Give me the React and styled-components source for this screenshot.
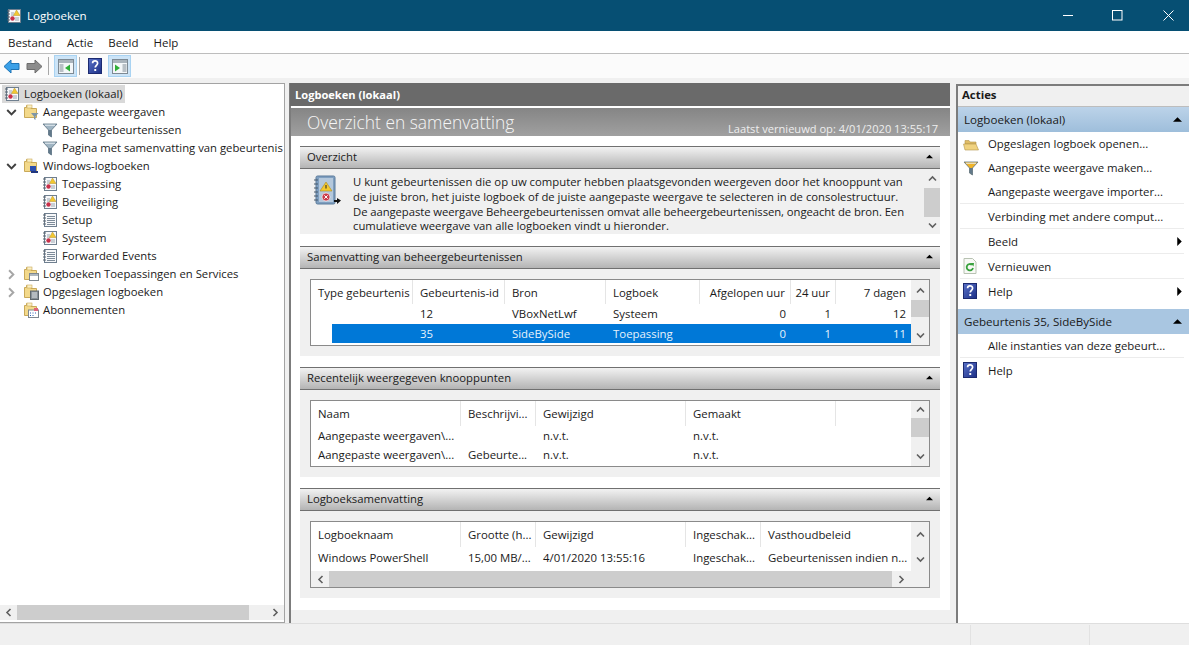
import React from "react"
import styled, { createGlobalStyle } from "styled-components"

const GlobalStyle = createGlobalStyle`
  html, body {
    margin: 0;
    padding: 0;
    background: #f0f0f0;
  }
  * {
    box-sizing: border-box;
  }
`

const Window = styled.div`
  width: 1189px;
  height: 645px;
  display: flex;
  flex-direction: column;
  overflow: hidden;
  font-family: "Open Sans", "Noto Sans", sans-serif;
  font-size: 11.4px;
  color: #1a1a1a;
`

const TitleBar = styled.div`
  height: 31px;
  flex: none;
  display: flex;
  align-items: center;
  padding-left: 6px;
  background: #064f73;
  color: #fff;
  font-size: 11.6px;
  gap: 5px;
`

const TitleText = styled.div`
  flex: 1;
`

const WinButton = styled.div`
  width: ${p => p.$w}px;
  height: 31px;
  display: flex;
  align-items: center;
  justify-content: center;
`

const MenuBar = styled.div`
  height: 23px;
  flex: none;
  display: flex;
  align-items: center;
  padding-left: 8px;
  gap: 15px;
  background: #fff;
  border-bottom: 1px solid #bdbdbd;
  font-size: 11.5px;
`

const Toolbar = styled.div`
  height: 24px;
  flex: none;
  display: flex;
  align-items: center;
  padding-left: 3px;
  background: #fbfbfb;
`

const ToolIcon = styled.div`
  width: ${p => p.$w || 23}px;
  height: 22px;
  display: flex;
  align-items: center;
  justify-content: center;
  ${p => p.$active && "background: #cce4f7; border: 1px solid #a9d3f2;"}
`

const ToolSep = styled.div`
  width: 1px;
  height: 18px;
  background: #a8a8a8;
  margin: 0 ${p => p.$r || 5}px 0 ${p => p.$l || 2}px;
`

const Panes = styled.div`
  flex: 1;
  min-height: 0;
  margin-top: 5px;
  display: flex;
  background: #f0f0f0;
`

const TreePane = styled.div`
  width: 285px;
  flex: none;
  display: flex;
  flex-direction: column;
  padding-bottom: 2px;
  background: #fff;
  border-top: 1px solid #a3a3a3;
  border-right: 1px solid #a3a3a3;
  border-bottom: 1px solid #a3a3a3;
`

const Tree = styled.div`
  flex: 1;
  min-height: 0;
  padding-top: 1px;
  overflow: hidden;
  font-size: 11.3px;
`

const TreeRow = styled.div`
  height: 18px;
  display: flex;
  align-items: center;
  white-space: nowrap;
  padding-left: ${p => (p.$level === 0 ? 2 : 4 + (p.$level - 1) * 19)}px;
`

const Twist = styled.div`
  width: 19px;
  flex: none;
  display: flex;
  align-items: center;
  padding-left: 2px;
`

const NodeLabel = styled.div`
  display: flex;
  align-items: center;
  gap: 4px;
  height: 18px;
  padding: 0 ${p => (p.$selected ? 2 : 0)}px 2px;
  background: ${p => (p.$selected ? "#d9d9d9" : "transparent")};

  svg {
    margin-top: 2px;
  }
`

const CenterPane = styled.div`
  width: 661px;
  flex: none;
  margin-left: 4px;
  display: flex;
  flex-direction: column;
  border-left: 2px solid #7c7c7c;
  background: #fff;
`

const PaneHeader = styled.div`
  height: 23px;
  flex: none;
  display: flex;
  align-items: center;
  padding-left: 5px;
  background: #6a6a6a;
  color: #fff;
  font-weight: 700;
  font-size: 11.1px;
  margin-left: -1px;
`

const Banner = styled.div`
  height: 28px;
  flex: none;
  margin-top: 2px;
  display: flex;
  align-items: flex-end;
  justify-content: space-between;
  padding: 0 12px 0 16px;
  background: linear-gradient(#858585, #a0a0a0);
  color: #f6f6f6;
`

const BannerTitle = styled.div`
  font-size: 17.4px;
  font-weight: 300;
  line-height: 28px;
`

const BannerMeta = styled.div`
  font-size: 11.1px;
  color: #eeeeee;
  line-height: 14px;
`

const CenterBody = styled.div`
  flex: 1;
  min-height: 0;
  padding: 10px 10px 0 9px;
  display: flex;
  flex-direction: column;
`

const Section = styled.div`
  flex: none;
  margin-bottom: ${p => p.$after ?? 11}px;
`

const SectionHead = styled.div`
  height: 23px;
  display: flex;
  align-items: center;
  justify-content: space-between;
  padding: 0 7px 2px 7px;
  background: linear-gradient(#f2f2f2, #b4b4b4);
  border-top: 1px solid #707070;
  border-bottom: 1px solid #707070;
  font-size: 11.3px;
`

const SectionBody = styled.div`
  background: #f0f0f0;
  padding: 10px;
`

const OverviewBody = styled.div`
  height: 65px;
  display: flex;
  background: #f0f0f0;
  overflow: hidden;
`

const OverviewIcon = styled.div`
  width: 53px;
  flex: none;
  padding: 6px 0 0 13px;
`

const OverviewText = styled.div`
  flex: 1;
  padding-top: 6px;
  line-height: 14.8px;
  font-size: 11.3px;
`

const OverviewLine = styled.div`
  white-space: nowrap;
  letter-spacing: ${p => (p.$tight ? "-0.07px" : "0")};
`

const ListBox = styled.div`
  height: 67px;
  display: flex;
  flex-direction: column;
  background: #fff;
  border: 1px solid #8a8a8a;
`

const ListMain = styled.div`
  flex: 1;
  min-height: 0;
  display: flex;
`

const Columns = styled.div`
  flex: 1;
  min-width: 0;
  display: flex;
  flex-direction: column;
`

const ListRow = styled.div`
  display: grid;
  grid-template-columns: ${p => p.$cols};
  height: ${p => p.$h}px;
  align-items: center;
  white-space: nowrap;
  background: ${p =>
    p.$selected
      ? "linear-gradient(to right, transparent 21px, #0078d7 21px)"
      : "transparent"};
  color: ${p => (p.$selected ? "#e6f2fb" : "#1a1a1a")};
`

const HeadCell = styled.div`
  height: 100%;
  display: flex;
  align-items: center;
  justify-content: ${p => (p.$right ? "flex-end" : "flex-start")};
  padding: 0 5px 0 7px;
  border-right: ${p => (p.$last ? "none" : "1px solid #e5e5e5")};
  overflow: hidden;
`

const Cell = styled.div`
  padding: 0 5px 0 7px;
  text-align: ${p => (p.$right ? "right" : "left")};
  overflow: hidden;
`

const VBar = styled.div`
  width: ${p => p.$w || 18}px;
  flex: none;
  display: flex;
  flex-direction: column;
  background: #f0f0f0;
`

const Arrow = styled.div`
  height: ${p => p.$size || 19}px;
  flex: none;
  display: flex;
  align-items: center;
  justify-content: center;
`

const VTrack = styled.div`
  flex: 1;
  min-height: 0;
`

const VThumb = styled.div`
  height: ${p => p.$h}px;
  background: #cdcdcd;
`

const HBar = styled.div`
  height: ${p => p.$h || 16}px;
  flex: none;
  display: flex;
  background: #f0f0f0;
`

const HArrow = styled.div`
  width: ${p => p.$w || 18}px;
  flex: none;
  display: flex;
  align-items: center;
  justify-content: center;
`

const HThumb = styled.div`
  width: ${p => p.$w}px;
  flex: none;
  background: #cdcdcd;
`

const HRest = styled.div`
  flex: 1;
`

const BottomBand = styled.div`
  margin: auto -10px 0 -9px;
  height: 13px;
  flex: none;
  background: #f0f0f0;
`

const ActionPane = styled.div`
  flex: 1;
  margin: 1px 0 0 6px;
  display: flex;
  flex-direction: column;
  background: #fff;
  border-left: 2px solid #7c7c7c;
  border-top: 2px solid #7c7c7c;
`

const ActionTitle = styled.div`
  height: 21px;
  flex: none;
  display: flex;
  align-items: center;
  padding: 0 0 3px 4px;
  background: #f0f0f0;
  font-weight: 700;
  font-size: 11.4px;
  border-bottom: 1px solid #bdbdbd;
`

const ActionHead = styled.div`
  height: 25px;
  flex: none;
  display: flex;
  align-items: center;
  justify-content: space-between;
  padding: 0 7px 0 6px;
  background: ${p => (p.$flat ? "#a9c6e1" : "linear-gradient(#bcd3e9, #9ebedb)")};
  margin-top: ${p => p.$top || 0}px;
  font-size: 11.6px;
`

const ActionRow = styled.div`
  height: ${p => p.$h || 25}px;
  flex: none;
  display: flex;
  align-items: center;
  margin: 0 5px 0 2px;
  border-bottom: ${p => (p.$line ? "1px solid #ececec" : "1px solid transparent")};
  white-space: nowrap;
`

const ActionIcon = styled.div`
  width: 28px;
  flex: none;
  display: flex;
  align-items: center;
  padding-left: 3px;
`

const ActionLabel = styled.div`
  flex: 1;
`

const StatusBar = styled.div`
  height: 22px;
  flex: none;
  display: flex;
  justify-content: flex-end;
  background: #f0f0f0;
  border-top: 1px solid #dedede;
`

const StatusCell = styled.div`
  width: ${p => p.$w}px;
  border-left: 1px solid #e2e2e2;
  margin-top: 1px;
`

const Chevron = ({ dir, color = "#5f5f5f", size = 9 }) => {
  const pts = {
    up: "1,6.5 4.5,3 8,6.5",
    down: "1,2.5 4.5,6 8,2.5",
    left: "6.5,1 3,4.5 6.5,8",
    right: "2.5,1 6,4.5 2.5,8",
  }
  return (
    <svg width={size} height={size} viewBox="0 0 9 9">
      <polyline points={pts[dir]} fill="none" stroke={color} strokeWidth="1.6" />
    </svg>
  )
}

const Caret = ({ dir = "up", size = 8 }) => (
  <svg width={size} height={size} viewBox="0 0 8 8">
    <polygon points={dir === "up" ? "0,6 4,2 8,6" : "2,0 6,4 2,8"} fill="#000" />
  </svg>
)

const LogIcon = ({ plain }) => (
  <svg width="16" height="16" viewBox="0 0 16 16">
    <rect x="2.5" y="1.5" width="12" height="13" fill="#f7f8fa" stroke="#6f7f8f" />
    <path d="M1 3h3M1 6h3M1 9h3M1 12h3" stroke="#55606c" />
    {plain ? (
      <path d="M5 4.5h8M5 6.5h8M5 8.5h8M5 10.5h8M5 12.5h8" stroke="#7d8b99" />
    ) : (
      <>
        <path d="M5 5h3M5 7h3M9 10h4M9 12h4" stroke="#9aa5b0" />
        <polygon points="10.5,2 14,7.5 7.5,7.5" fill="#f2c830" stroke="#b8932a" strokeWidth="0.5" />
        <circle cx="6.5" cy="10.5" r="2.2" fill="#c8304a" />
      </>
    )}
  </svg>
)

const FunnelIcon = ({ accent }) => (
  <svg width="16" height="16" viewBox="0 0 16 16">
    <polygon points="1,2 15,2 9.5,8 9.5,15 6.5,13 6.5,8" fill={accent ? "#f0b429" : "#9fb4c2"} stroke="#5e7484" strokeWidth="0.8" />
    <polygon points="6.5,8 9.5,8 9.5,15 6.5,13" fill="#62798a" />
    <path d="M3 3.2h10" stroke="#e9f0f5" />
  </svg>
)

const FolderIcon = ({ children }) => (
  <svg width="16" height="16" viewBox="0 0 16 16">
    <path d="M1.5 3.5v10h12v-9H8V1.5H3.5v2z" fill="#f3d98b" stroke="#c9a959" />
    <rect x="4" y="1" width="5" height="3" fill="#fbf0c4" stroke="#c9a959" strokeWidth="0.6" />
    {children}
  </svg>
)

const BookIcon = () => (
  <svg width="28" height="32" viewBox="0 0 28 32">
    <rect x="3" y="1" width="19" height="28" rx="1.5" fill="#7f9fc0" stroke="#5b7b9b" />
    <rect x="6" y="3" width="14" height="24" fill="#b4c8dc" />
    <path d="M1 5h4M1 9h4M1 13h4M1 17h4M1 21h4M1 25h4" stroke="#47586a" />
    <polygon points="13,7 19,16 7,16" fill="#f4c92f" stroke="#a98a22" strokeWidth="0.6" />
    <rect x="12.5" y="10" width="1" height="3.5" fill="#222" />
    <circle cx="13" cy="22" r="4" fill="#c93a4a" stroke="#fff" strokeWidth="0.6" />
    <path d="M11.3 20.3l3.4 3.4M14.7 20.3l-3.4 3.4" stroke="#fff" />
    <path d="M21 25h3v-2l4 2.5-4 3.5v-2h-3z" fill="#111" />
  </svg>
)

const HelpIcon = () => (
  <svg width="14" height="16" viewBox="0 0 14 16">
    <defs>
      <linearGradient id="helpFill" x1="0" y1="0" x2="1" y2="1">
        <stop offset="0" stopColor="#5a72c8" />
        <stop offset="1" stopColor="#1c2f86" />
      </linearGradient>
    </defs>
    <rect x="0.5" y="0.5" width="13" height="15" fill="url(#helpFill)" stroke="#1c2a70" />
    <path d="M4.6 5.2c0-3 5-3 5 0 0 2-2.4 2.2-2.4 4.4" fill="none" stroke="#fff" strokeWidth="1.7" />
    <rect x="6.3" y="11" width="1.9" height="2" fill="#fff" />
  </svg>
)

const ArrowIcon = ({ flip, color, edge }) => (
  <svg width="17" height="15" viewBox="0 0 17 15">
    <polygon
      points="1,7.5 8,1 8,4.5 16,4.5 16,10.5 8,10.5 8,14"
      fill={color}
      stroke={edge}
      transform={flip ? "matrix(-1 0 0 1 17 0)" : undefined}
    />
  </svg>
)

const PaneLayoutIcon = ({ right }) => (
  <svg width="16" height="15" viewBox="0 0 16 15">
    <rect x="0.5" y="0.5" width="15" height="14" fill="#f4f7f9" stroke="#7e8a94" />
    <rect x="1" y="1" width="14" height="3" fill="#aab4bc" />
    {right ? (
      <>
        <path d="M10.5 6h4M10.5 8h4M10.5 10h4M10.5 12h4" stroke="#7e8a94" />
        <polygon points="3,5.5 8,9 3,12.5" fill="#2fae38" />
      </>
    ) : (
      <>
        <path d="M1.5 6h4M1.5 8h4M1.5 10h4M1.5 12h4" stroke="#7e8a94" />
        <polygon points="12,5.5 7,9 12,12.5" fill="#2fae38" />
      </>
    )}
  </svg>
)

const OpenFolderIcon = () => (
  <svg width="16" height="14" viewBox="0 0 16 14">
    <path d="M2 3.5h4l1 1.5h6v2H2z" fill="#e0bd66" stroke="#b3944c" strokeWidth="0.6" />
    <polygon points="0.5,7 13,7 15.5,13 2,13" fill="#f0d27f" stroke="#b3944c" strokeWidth="0.6" />
  </svg>
)

const RefreshIcon = () => (
  <svg width="14" height="16" viewBox="0 0 14 16">
    <path d="M1 .5h8.5L13 4v11.5H1z" fill="#f7f9f5" stroke="#b8c2b2" />
    <path d="M10 10a3.2 3.2 0 1 1-1-3.2" fill="none" stroke="#37a13c" strokeWidth="1.8" />
    <polygon points="7.5,5 11,5 10.5,8.5" fill="#37a13c" />
  </svg>
)

const VScroll = ({ thumb, arrowTop = 19, arrowBottom = 19, width }) => (
  <VBar $w={width}>
    <Arrow $size={arrowTop}>
      <Chevron dir="up" />
    </Arrow>
    <VTrack>{thumb && <VThumb $h={thumb} />}</VTrack>
    <Arrow $size={arrowBottom}>
      <Chevron dir="down" />
    </Arrow>
  </VBar>
)

const treeNodes = [
  { level: 0, label: "Logboeken (lokaal)", icon: <LogIcon />, selected: true },
  {
    level: 1,
    twist: "down",
    label: "Aangepaste weergaven",
    icon: (
      <FolderIcon>
        <polygon points="8,9 15.5,9 12.5,12.5 12.5,16 11,15 11,12.5" fill="#7f96a6" />
      </FolderIcon>
    ),
  },
  { level: 2, label: "Beheergebeurtenissen", icon: <FunnelIcon /> },
  { level: 2, label: "Pagina met samenvatting van gebeurtenis", icon: <FunnelIcon /> },
  {
    level: 1,
    twist: "down",
    label: "Windows-logboeken",
    icon: (
      <FolderIcon>
        <rect x="7" y="8" width="6" height="5" fill="#2c4fb0" />
        <rect x="8" y="13" width="7" height="2" fill="#20367e" />
      </FolderIcon>
    ),
  },
  { level: 2, label: "Toepassing", icon: <LogIcon /> },
  { level: 2, label: "Beveiliging", icon: <LogIcon /> },
  { level: 2, label: "Setup", icon: <LogIcon plain /> },
  { level: 2, label: "Systeem", icon: <LogIcon /> },
  { level: 2, label: "Forwarded Events", icon: <LogIcon plain /> },
  {
    level: 1,
    twist: "right",
    label: "Logboeken Toepassingen en Services",
    icon: (
      <FolderIcon>
        <rect x="6.5" y="7.5" width="9" height="7" fill="#fff" stroke="#7d8790" />
        <rect x="7" y="8" width="8" height="2" fill="#aeb7be" />
      </FolderIcon>
    ),
  },
  {
    level: 1,
    twist: "right",
    label: "Opgeslagen logboeken",
    icon: (
      <FolderIcon>
        <rect x="7.5" y="7" width="8" height="8.5" fill="#8a9299" stroke="#5f676d" />
        <path d="M9 9h5M9 11h5M9 13h5" stroke="#dfe3e6" />
      </FolderIcon>
    ),
  },
  {
    level: 1,
    label: "Abonnementen",
    icon: (
      <FolderIcon>
        <rect x="5.5" y="8" width="10" height="7.5" fill="#fff" stroke="#7d8790" />
        <rect x="11" y="6" width="4" height="3" fill="#e0637a" />
        <path d="M7 11h1M9.5 11h1M12 11h1M7 13.5h1M9.5 13.5h1" stroke="#2c62b5" />
      </FolderIcon>
    ),
  },
]

const summaryCols = "102px 92px 101px 94px 91px 45px 1fr"
const recentCols = "150px 75px 150px 150px 1fr"
const logCols = "150px 75px 150px 75px 1fr"

const DataList = ({ cols, headH, rowH, head, rows, selected, right = [] }) => (
  <Columns>
    <ListRow $cols={cols} $h={headH}>
      {head.map((h, i) => (
        <HeadCell key={i} $right={right.includes(i)} $last={i === head.length - 1}>
          {h}
        </HeadCell>
      ))}
    </ListRow>
    {rows.map((row, r) => (
      <ListRow key={r} $cols={cols} $h={rowH} $selected={selected === r}>
        {row.map((c, i) => (
          <Cell key={i} $right={right.includes(i)}>
            {c}
          </Cell>
        ))}
      </ListRow>
    ))}
  </Columns>
)

const SectionHeader = ({ children }) => (
  <SectionHead>
    {children}
    <Caret size={7} />
  </SectionHead>
)

export default function App() {
  return (
    <Window>
      <GlobalStyle />
      <TitleBar>
        <LogIcon />
        <TitleText>Logboeken</TitleText>
        <WinButton $w={38}>
          <svg width="11" height="11" viewBox="0 0 11 11">
            <path d="M0 5.5h10" stroke="#fff" />
          </svg>
        </WinButton>
        <WinButton $w={50}>
          <svg width="11" height="11" viewBox="0 0 11 11">
            <rect x="0.5" y="0.5" width="9.5" height="9.5" fill="none" stroke="#fff" />
          </svg>
        </WinButton>
        <WinButton $w={42}>
          <svg width="11" height="11" viewBox="0 0 11 11">
            <path d="M0.5 0.5l10 10M10.5 0.5l-10 10" stroke="#fff" />
          </svg>
        </WinButton>
      </TitleBar>

      <MenuBar>
        <span>Bestand</span>
        <span>Actie</span>
        <span>Beeld</span>
        <span>Help</span>
      </MenuBar>

      <Toolbar>
        <ToolIcon $w={17}>
          <ArrowIcon color="#3aa0e8" edge="#1d73b5" />
        </ToolIcon>
        <ToolIcon $w={6} />
        <ToolIcon $w={17}>
          <ArrowIcon flip color="#8c8c8c" edge="#6d6d6d" />
        </ToolIcon>
        <ToolSep $l={5} $r={5} />
        <ToolIcon $active>
          <PaneLayoutIcon />
        </ToolIcon>
        <ToolSep />
        <ToolIcon $w={20}>
          <HelpIcon />
        </ToolIcon>
        <ToolIcon $w={3} />
        <ToolIcon $active>
          <PaneLayoutIcon right />
        </ToolIcon>
      </Toolbar>

      <Panes>
        <TreePane>
          <Tree>
            {treeNodes.map(node => (
              <TreeRow key={node.label} $level={node.level}>
                {node.level > 0 && (
                  <Twist>
                    {node.twist && (
                      <Chevron
                        dir={node.twist}
                        color={node.twist === "down" ? "#404040" : "#a6a6a6"}
                        size={11}
                      />
                    )}
                  </Twist>
                )}
                <NodeLabel $selected={node.selected}>
                  {node.icon}
                  {node.label}
                </NodeLabel>
              </TreeRow>
            ))}
          </Tree>
          <HBar $h={15}>
            <HArrow $w={17}>
              <Chevron dir="left" />
            </HArrow>
            <HThumb $w={232} />
            <HRest />
            <HArrow $w={17}>
              <Chevron dir="right" />
            </HArrow>
          </HBar>
        </TreePane>

        <CenterPane>
          <PaneHeader>Logboeken (lokaal)</PaneHeader>
          <Banner>
            <BannerTitle>Overzicht en samenvatting</BannerTitle>
            <BannerMeta>Laatst vernieuwd op: 4/01/2020 13:55:17</BannerMeta>
          </Banner>
          <CenterBody>
            <Section $after={12}>
              <SectionHeader>Overzicht</SectionHeader>
              <OverviewBody>
                <OverviewIcon>
                  <BookIcon />
                </OverviewIcon>
                <OverviewText>
                  <OverviewLine>
                    U kunt gebeurtenissen die op uw computer hebben plaatsgevonden weergeven door het knooppunt van
                  </OverviewLine>
                  <OverviewLine>
                    de juiste bron, het juiste logboek of de juiste aangepaste weergave te selecteren in de consolestructuur.
                  </OverviewLine>
                  <OverviewLine $tight>
                    De aangepaste weergave Beheergebeurtenissen omvat alle beheergebeurtenissen, ongeacht de bron. Een
                  </OverviewLine>
                  <OverviewLine>
                    cumulatieve weergave van alle logboeken vindt u hieronder.
                  </OverviewLine>
                </OverviewText>
                <VScroll width={16} thumb={29} arrowTop={19} arrowBottom={17} />
              </OverviewBody>
            </Section>

            <Section>
              <SectionHeader>Samenvatting van beheergebeurtenissen</SectionHeader>
              <SectionBody>
                <ListBox>
                  <ListMain>
                    <DataList
                      cols={summaryCols}
                      headH={24}
                      rowH={19.5}
                      head={["Type gebeurtenis", "Gebeurtenis-id", "Bron", "Logboek", "Afgelopen uur", "24 uur", "7 dagen"]}
                      right={[4, 5, 6]}
                      selected={1}
                      rows={[
                        ["", "12", "VBoxNetLwf", "Systeem", "0", "1", "12"],
                        ["", "35", "SideBySide", "Toepassing", "0", "1", "11"],
                      ]}
                    />
                    <VScroll thumb={17} arrowTop={20} arrowBottom={19} />
                  </ListMain>
                </ListBox>
              </SectionBody>
            </Section>

            <Section>
              <SectionHeader>Recentelijk weergegeven knooppunten</SectionHeader>
              <SectionBody>
                <ListBox>
                  <ListMain>
                    <DataList
                      cols={recentCols}
                      headH={25}
                      rowH={19}
                      head={["Naam", "Beschrijvi...", "Gewijzigd", "Gemaakt", ""]}
                      rows={[
                        ["Aangepaste weergaven\\...", "", "n.v.t.", "n.v.t.", ""],
                        ["Aangepaste weergaven\\...", "Gebeurte...", "n.v.t.", "n.v.t.", ""],
                      ]}
                    />
                    <VScroll thumb={19} arrowTop={17} arrowBottom={20} />
                  </ListMain>
                </ListBox>
              </SectionBody>
            </Section>

            <Section $after={0}>
              <SectionHeader>Logboeksamenvatting</SectionHeader>
              <SectionBody>
                <ListBox>
                  <ListMain>
                    <DataList
                      cols={logCols}
                      headH={25}
                      rowH={20}
                      head={["Logboeknaam", "Grootte (h...", "Gewijzigd", "Ingeschak...", "Vasthoudbeleid"]}
                      rows={[
                        ["Windows PowerShell", "15,00 MB/...", "4/01/2020 13:55:16", "Ingeschak...", "Gebeurtenissen indien n..."],
                      ]}
                    />
                    <VScroll arrowTop={24} arrowBottom={24} />
                  </ListMain>
                  <HBar>
                    <HArrow>
                      <Chevron dir="left" />
                    </HArrow>
                    <HThumb $w={563} />
                    <HArrow $w={19}>
                      <Chevron dir="right" />
                    </HArrow>
                    <HRest />
                  </HBar>
                </ListBox>
              </SectionBody>
            </Section>
            <BottomBand />
          </CenterBody>
        </CenterPane>

        <ActionPane>
          <ActionTitle>Acties</ActionTitle>
          <ActionHead>
            Logboeken (lokaal)
            <Caret size={9} />
          </ActionHead>
          <ActionRow $h={24}>
            <ActionIcon>
              <OpenFolderIcon />
            </ActionIcon>
            <ActionLabel>Opgeslagen logboek openen...</ActionLabel>
          </ActionRow>
          <ActionRow $h={24}>
            <ActionIcon>
              <FunnelIcon accent />
            </ActionIcon>
            <ActionLabel>Aangepaste weergave maken...</ActionLabel>
          </ActionRow>
          <ActionRow $h={24} $line>
            <ActionIcon />
            <ActionLabel>Aangepaste weergave importer...</ActionLabel>
          </ActionRow>
          <ActionRow $line>
            <ActionIcon />
            <ActionLabel>Verbinding met andere comput...</ActionLabel>
          </ActionRow>
          <ActionRow $line>
            <ActionIcon />
            <ActionLabel>Beeld</ActionLabel>
            <Caret dir="right" size={9} />
          </ActionRow>
          <ActionRow $line>
            <ActionIcon>
              <RefreshIcon />
            </ActionIcon>
            <ActionLabel>Vernieuwen</ActionLabel>
          </ActionRow>
          <ActionRow>
            <ActionIcon>
              <HelpIcon />
            </ActionIcon>
            <ActionLabel>Help</ActionLabel>
            <Caret dir="right" size={9} />
          </ActionRow>
          <ActionHead $flat $top={5}>
            Gebeurtenis 35, SideBySide
            <Caret size={9} />
          </ActionHead>
          <ActionRow $h={24} $line>
            <ActionIcon />
            <ActionLabel>Alle instanties van deze gebeurt...</ActionLabel>
          </ActionRow>
          <ActionRow>
            <ActionIcon>
              <HelpIcon />
            </ActionIcon>
            <ActionLabel>Help</ActionLabel>
          </ActionRow>
        </ActionPane>
      </Panes>

      <StatusBar>
        <StatusCell $w={119} />
        <StatusCell $w={100} />
      </StatusBar>
    </Window>
  )
}
